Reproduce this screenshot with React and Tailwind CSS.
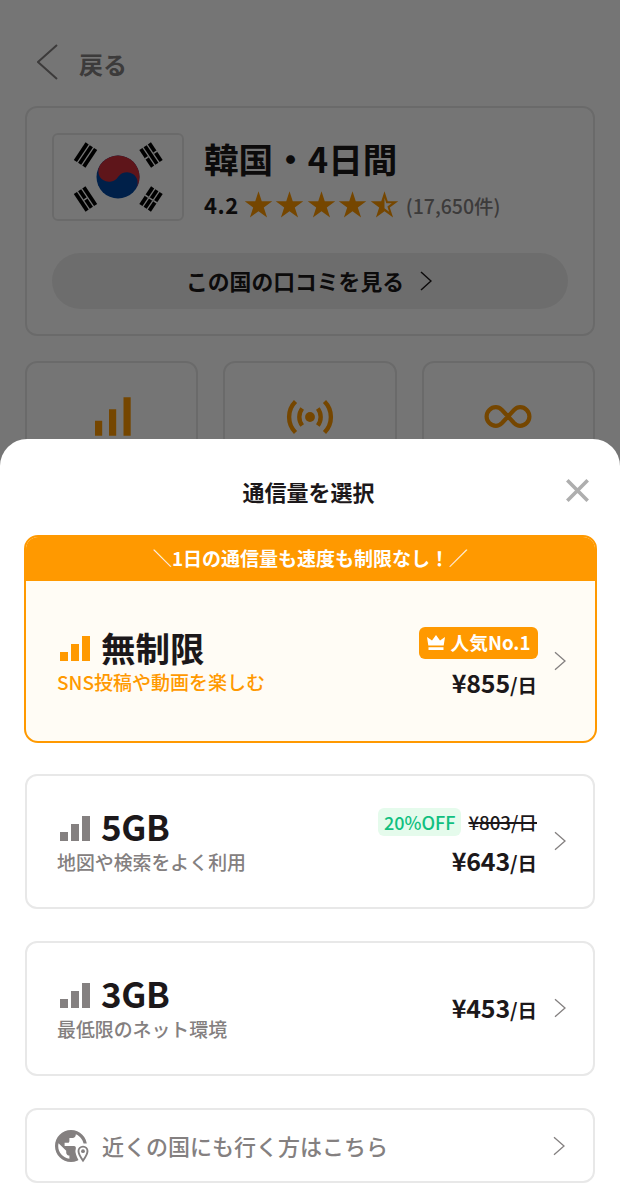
const star = "M12 1 L14.7 9.3 H23.4 L16.4 14.4 L19.1 22.7 L12 17.6 L4.9 22.7 L7.6 14.4 L0.6 9.3 H9.3 Z";

function Star({ half }) {
  return (
    <svg viewBox="0 0 24 24" className="w-[29px] h-[29px] text-[#ff9900]" fill="currentColor">
      {half ? (
        <path fillRule="evenodd" d={star + " M12 6.6 V15.2 L15.8 18 L14.4 13.6 L18 11 H13.5 Z"} />
      ) : (
        <path d={star} />
      )}
    </svg>
  );
}

function Chevron() {
  return (
    <svg viewBox="0 0 12 20" className="w-3 h-5 shrink-0" fill="none" stroke="#848080" strokeWidth="1.3">
      <path d="M1 1.2 L11 10 L1 18.8" />
    </svg>
  );
}

function Bars({ className }) {
  return (
    <svg viewBox="0 0 31 25" className={"w-[31px] h-[25px] " + className} fill="currentColor">
      <path d="M0 16h8v9H0zM11 8h8v17h-8zM22 0h8v25h-8z" />
    </svg>
  );
}

// one trigram: three bars, a broken one is drawn as two halves
function Trigram({ x, y, angle, broken }) {
  return (
    <g transform={`translate(${x} ${y}) rotate(${angle})`}>
      {[-5.1, 0, 5.1].map((dy, i) => (
        <g key={i}>
          <rect x="-10.6" y={dy - 1.9} width="21.2" height="3.8" fill="#000" />
          {broken[i] && <rect x="-0.8" y={dy - 2.1} width="1.6" height="4.2" fill="#fff" />}
        </g>
      ))}
    </g>
  );
}

function Flag() {
  return (
    <div className="w-[132px] h-[88px] rounded-md border-2 border-[#e8e8e8] flex items-center justify-center">
      <svg viewBox="0 0 128 84" className="w-32 h-[84px]">
        <circle cx="64" cy="42" r="21.5" fill="#0047a0" />
        <g transform="rotate(33.7 64 42)">
          <path d="M42.5 42a21.5 21.5 0 0 1 43 0a10.75 10.75 0 0 0-21.5 0a10.75 10.75 0 0 1-21.5 0z" fill="#cd2e3a" />
        </g>
        <Trigram x={31.5} y={20} angle={-56.3} broken={[false, false, false]} />
        <Trigram x={97} y={20} angle={56.3} broken={[true, false, true]} />
        <Trigram x={31.5} y={64} angle={56.3} broken={[false, true, false]} />
        <Trigram x={97} y={64} angle={-56.3} broken={[true, true, true]} />
      </svg>
    </div>
  );
}

function Feature({ children }) {
  return (
    <div className="h-44 rounded-xl border-2 border-[#e8e8e8] pt-[34px] flex justify-center items-start text-[#ff9900]">
      {children}
    </div>
  );
}

function Price({ value }) {
  return (
    <div className="flex items-baseline font-bold leading-8">
      <span className="text-[25px] tracking-[-0.2px]">{value}</span>
      <span className="text-[19.5px]">/日</span>
    </div>
  );
}

function Plan({ name, note, children }) {
  return (
    <button className="w-full h-[135px] rounded-xl border-2 border-[#e8e8e8] flex items-center pl-[30px] pr-[27px] text-left">
      <div className="flex-1">
        <div className="flex items-end gap-[10px] h-9">
          <Bars className="ml-[3px] mb-[3px] text-[#848080]" />
          <span className="text-[35px] leading-9 font-bold tracking-[-0.4px]">{name}</span>
        </div>
        <p className="text-[18.9px] leading-7 mt-1 font-medium text-[#848080]">{note}</p>
      </div>
      {children}
      <div className="ml-[17px] -mt-px"><Chevron /></div>
    </button>
  );
}

export default function App() {
  return (
    <div className="relative w-full h-[1200px] overflow-hidden bg-white text-[#1c181a] font-['Noto_Sans_CJK_JP',sans-serif]">
      <div className="px-[25px] pt-11">
        <div className="flex items-center h-9 pl-3 gap-[20px] text-[#848080]">
          <svg viewBox="0 0 22 36" className="w-[22px] h-9" fill="none" stroke="currentColor" strokeWidth="2">
            <path d="M20 1 L1 18 L20 35" />
          </svg>
          <span className="text-2xl font-bold leading-9 pt-1">戻る</span>
        </div>

        <div className="mt-[26px] h-[230px] rounded-xl border-2 border-[#e8e8e8] px-[25px] pt-[25px]">
          <div className="flex gap-5">
            <Flag />
            <div className="pt-[2px]">
              <h1 className="text-[34.6px] leading-[46px] font-bold">韓国・4日間</h1>
              <div className="flex items-center h-9 mt-[5px]">
                <span className="text-[22px] leading-8 font-bold mr-[5px] tracking-wide">4.2</span>
                <div className="flex gap-[2.5px]">
                  <Star />
                  <Star />
                  <Star />
                  <Star />
                  <Star half />
                </div>
                <span className="ml-[7px] mt-1 text-[19.5px] leading-8 font-medium text-[#848080]">(17,650件)</span>
              </div>
            </div>
          </div>
          <button className="mt-[31px] w-full h-14 rounded-full bg-[#eeeeee] flex items-center justify-center gap-4 text-[21.8px] font-bold pr-0.5">
            この国の口コミを見る
            <svg viewBox="0 0 12 20" className="w-3 h-5" fill="none" stroke="currentColor" strokeWidth="1.5">
              <path d="M1 1 L11 10 L1 19" />
            </svg>
          </button>
        </div>

        <div className="mt-[25px] grid grid-cols-3 gap-[25px]">
          <Feature>
            <svg viewBox="0 0 36 38.5" className="ml-0.5 w-9 h-[39px]" fill="currentColor">
              <path d="M0 23.5h7.2v15H0zM14 12h7.2v26.5H14zM28.5 0h7.2v38.5h-7.2z" />
            </svg>
          </Feature>
          <Feature>
            <svg viewBox="0 0 50 40" className="w-[50px] h-10" fill="none" stroke="currentColor" strokeWidth="4.4">
              <circle cx="25" cy="20" r="4.9" fill="currentColor" stroke="none" />
              <path d="M17.2 11.5a14 14 0 0 0 0 17M32.800 11.5a14 14 0 0 1 0 17M10.500 4.500a22 22 0 0 0 0 31M39.500 4.500a22 22 0 0 1 0 31" />
            </svg>
          </Feature>
          <Feature>
            <svg viewBox="0 0 48 40" className="w-12 h-10" fill="none" stroke="currentColor" strokeWidth="4.2">
              <path d="M24 19.500L18 13C16 11 14.200 10.200 11.900 10.200a9.300 9.300 0 0 0 0 18.600C14.200 28.800 16 28 18 26L30 13C32 11 33.800 10.200 36.100 10.200a9.300 9.300 0 0 1 0 18.600C33.800 28.800 32 28 30 26Z" />
            </svg>
          </Feature>
        </div>
      </div>

      <div className="absolute inset-0 bg-black/54" />

      <div className="absolute inset-x-0 bottom-0 h-[761px] rounded-t-[27px] bg-white">
        <div className="relative h-24 flex items-center justify-center pt-[8px] pr-[3px]">
          <h2 className="text-[22px] font-bold">通信量を選択</h2>
          <button className="absolute right-[31px] top-[40px]">
            <svg viewBox="0 0 23 23" className="w-[23px] h-[23px]" fill="none" stroke="#aeaeae" strokeWidth="3.6">
              <path d="M1.3 1.3 L21.7 21.7 M21.7 1.3 L1.3 21.7" />
            </svg>
          </button>
        </div>

        <div className="mx-6 w-[573px] h-52 rounded-[14px] border-2 border-[#ff9900] bg-[#fffcf5] overflow-hidden">
          <p className="h-11 bg-[#ff9900] text-white text-[19px] leading-[42px] font-bold text-center">
            <span className="font-normal">＼</span>1日の通信量も速度も制限なし！<span className="font-normal">／</span>
          </p>
          <div className="h-40 flex items-center pl-[31px] pr-[29px]">
            <div className="flex-1 pt-0.5">
              <div className="flex items-end gap-[10px] h-9">
                <Bars className="ml-[3px] mb-1 text-[#ff9900]" />
                <span className="text-[34.5px] leading-9 font-bold">無制限</span>
              </div>
              <p className="text-[19px] leading-7 mt-[3px] font-medium text-[#ff9900]">SNS投稿や動画を楽しむ</p>
            </div>
            <div className="flex flex-col items-end pt-[5px]">
              <span className="-mr-px h-8 w-[119px] rounded-md bg-[#ff9900] text-white flex items-center justify-center gap-1.5 text-[18.7px] leading-8 font-bold">
                <svg viewBox="0 0 18 16" className="w-[18px] h-4" fill="currentColor">
                  <path d="M1.3 10.5 L0 2 L5 5.5 L9 0 L13 5.5 L18 2 L16.7 10.5ZM1.5 12.3h15v2.7h-15z" />
                </svg>
                <span className="-mt-0.5">人気No.1</span>
              </span>
              <div className="mt-[7px]"><Price value="¥855" /></div>
            </div>
            <div className="ml-[17px]"><Chevron /></div>
          </div>
        </div>

        <div className="px-[25px] pt-[31px] flex flex-col gap-8">
          <Plan name="5GB" note="地図や検索をよく利用">
            <div className="flex flex-col items-end pt-[3px]">
              <div className="flex items-center gap-[7px] h-7">
                <span className="h-7 px-1.5 rounded-md bg-[#e5fbec] text-[#10c080] text-[18px] leading-7 font-medium">20%OFF</span>
                <span className="text-[18.7px] leading-7 font-medium line-through decoration-2">¥803/日</span>
              </div>
              <div className="mt-2"><Price value="¥643" /></div>
            </div>
          </Plan>
          <Plan name="3GB" note="最低限のネット環境">
            <Price value="¥453" />
          </Plan>
          <button className="w-full h-[75px] rounded-xl border-2 border-[#e8e8e8] flex items-center pl-[27px] pr-[28px] text-[#848080]">
            <svg viewBox="0 0 36 36" className="w-9 h-9">
              <g transform="translate(-2.2 -1.2) scale(1.6)" fill="currentColor">
                <path d="M12 2C6.48 2 2 6.48 2 12s4.48 10 10 10 10-4.48 10-10S17.52 2 12 2zm-1 17.93c-3.95-.49-7-3.85-7-7.93 0-.62.08-1.21.21-1.79L9 15v1c0 1.1.9 2 2 2v1.93zm6.9-2.54c-.26-.81-1-1.39-1.9-1.39h-1v-3c0-.55-.45-1-1-1H8v-2h2c.55 0 1-.45 1-1V7h2c1.1 0 2-.9 2-2v-.41c2.93 1.19 5 4.06 5 7.41 0 2.08-.8 3.97-2.1 5.39z" />
              </g>
              <path d="M29 15.5a7.5 7.5 0 0 0-7.5 7.5c0 5 3.5 9 5 13h10V15.5z" fill="#fff" />
              <path d="M29 18.6a4.5 4.5 0 0 0-4.5 4.5c0 3.5 4.5 9.5 4.5 9.5s4.5-6 4.5-9.5a4.5 4.5 0 0 0-4.5-4.5z" fill="none" stroke="currentColor" strokeWidth="1.9" />
              <circle cx="29" cy="23.2" r="1.9" fill="currentColor" />
            </svg>
            <span className="ml-3 flex-1 text-left text-[22px] font-medium">近くの国にも行く方はこちら</span>
            <Chevron />
          </button>
        </div>
      </div>
    </div>
  );
}
